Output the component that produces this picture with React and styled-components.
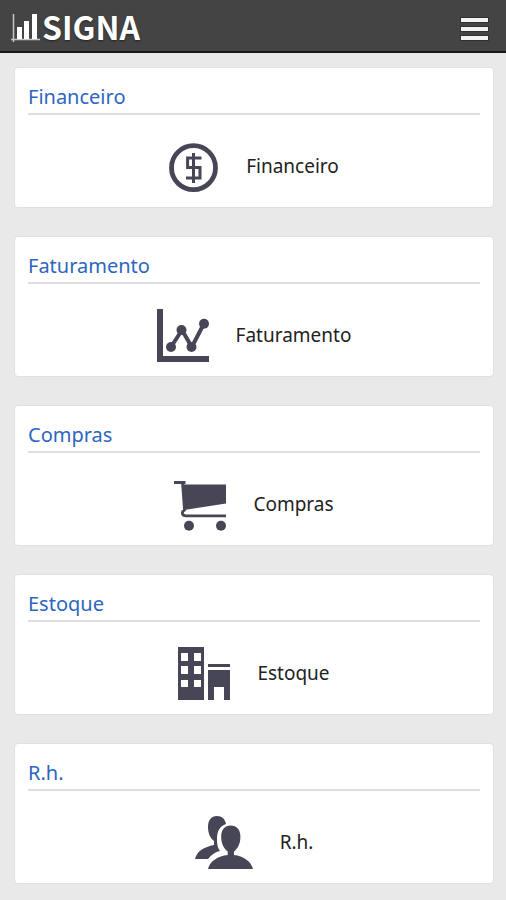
import React from 'react'
import styled, { createGlobalStyle } from 'styled-components'

const GlobalStyle = createGlobalStyle`
    *{
        box-sizing:border-box;
    }

    body{
        margin:0;
        background-color:#e9e9e9;
        font-family:"Noto Sans", "Open Sans", sans-serif;
    }
`

const Header = styled.header`
    display:flex;
    align-items:center;
    justify-content:space-between;
    height:53px;
    padding:0 16px 0 10px;
    background-color:#444;
    border-bottom:2px solid #1c1919;
`

const Logo = styled.a`
    display:flex;
    align-items:center;
    gap:1px;
    color:#fff;
    font-family:"Noto Sans CJK JP", "Open Sans", sans-serif;
    font-size:32px;
    font-weight:700;
    line-height:40px;
    text-decoration:none;
    text-shadow:0 1px 2px #222;
`

const MenuButton = styled.button`
    display:flex;
    padding:4px 0 0;
    border:none;
    background-color:transparent;
    cursor:pointer;
`

const Main = styled.main`
    display:flex;
    flex-direction:column;
    gap:28px;
    padding:14px 12px 16px 14px;
`

const Card = styled.section`
    padding:14px 13px;
    background-color:#fff;
    border:1px solid #e0e0e0;
    border-radius:4px;
`

const Title = styled.h2`
    margin:0;
    padding-bottom:1px;
    border-bottom:2px solid #dedede;
    color:#2c66c0;
    font-size:20px;
    font-weight:400;
    line-height:30px;
`

const Item = styled.a`
    display:flex;
    align-items:center;
    justify-content:center;
    gap:27px;
    margin-top:24px;
    color:#222;
    font-size:19px;
    line-height:54px;
    text-decoration:none;
`

const Icon = styled.svg`
    flex:none;
    width:${({$width}) => $width}px;
    height:54px;
    color:#464657;
`

const LogoIcon = () => (
    <svg width="31" height="32" viewBox="0 0 31 32" fill="#fff" aria-hidden="true">
        <path d="M3.5 4V32M1 29.5H30" stroke="#c4c4c4" strokeWidth="1.5" />
        <path d="M7 17h5v12H7zM14 11h5v18h-5zM22 4h5v25h-5z" />
    </svg>
)

const MenuIcon = () => (
    <svg width="30" height="28" viewBox="0 0 30 28" aria-hidden="true">
        <path d="M0 3h29v6H0zM0 12h29v6H0zM0 21h29v6H0z" fill="#303030" />
        <path d="M1 4h27v4H1zM1 13h27v4H1zM1 22h27v4H1z" fill="#f2f4f4" />
    </svg>
)

const MoneyIcon = () => (
    <Icon $width={50} viewBox="0 0 50 54" fill="none" stroke="currentColor" aria-hidden="true">
        <circle cx="24.5" cy="28.7" r="22" strokeWidth="4.8" />
        <path d="M24.5 14v30M32.5 19H18.6v9.6H31V39H17" strokeWidth="3" />
    </Icon>
)

const ChartIcon = () => (
    <Icon $width={52} viewBox="0 0 52 54" fill="currentColor" aria-hidden="true">
        <path d="M0 1h6v47h46v6H0z" />
        <path d="M14 39L25 22l9.8 17 12.2-23.500" fill="none" stroke="currentColor" strokeWidth="4" />
        <circle cx="14" cy="39" r="5" />
        <circle cx="24.5" cy="22" r="5" />
        <circle cx="34.5" cy="39" r="5" />
        <circle cx="47" cy="15.7" r="5" />
    </Icon>
)

const CartIcon = () => (
    <Icon $width={52} viewBox="0 0 52 54" fill="currentColor" aria-hidden="true">
        <path d="M8 7.5h44v19L10 33z" />
        <path
            d="M0 5.5h11.5M8.5 5.5L10.5 33C7 35 8 38.8 12 38.8h40"
            fill="none"
            stroke="currentColor"
            strokeWidth="2.8"
        />
        <circle cx="15" cy="48.7" r="5" />
        <circle cx="47" cy="48.7" r="5" />
    </Icon>
)

const BuildingIcon = () => (
    <Icon $width={52} viewBox="0 0 52 54" fill="currentColor" aria-hidden="true">
        <path
            fillRule="evenodd"
            d="M0 1h26v53H0zM3 7v8h7V7zM16 7v8h7V7zM3 20v8h7v-8zM16 20v8h7v-8zM3 34v7h7v-7zM16 34v7h7v-7z"
        />
        <path d="M30 18h22v3H30zM30 24h22v30h-6V41H36v13h-6z" />
    </Icon>
)

const PeopleIcon = () => (
    <Icon $width={58} viewBox="0 0 58 54" fill="currentColor" aria-hidden="true">
        <path d="M22 1c-6 0-9 4-9 11 0 6 2 11 6 14v4C9 32 2 36 0 44h13c3-4 7-7 12-8-3-4-3-9-3-13 0-7 3-12 9-14-1-5-4-8-9-8z" />
        <path d="M35.7 10.5c-6 0-9.5 4-9.5 11.5 0 6 2.5 11.5 6.5 14.5V40C23 41 15 46 13 54h45c-2-8-10-13-19-14v-3.5c4-3 6.4-8.5 6.4-14.5 0-7.5-3.7-11.5-9.7-11.5z" />
    </Icon>
)

const sections = [
    { name: 'Financeiro', Symbol: MoneyIcon },
    { name: 'Faturamento', Symbol: ChartIcon },
    { name: 'Compras', Symbol: CartIcon },
    { name: 'Estoque', Symbol: BuildingIcon },
    { name: 'R.h.', Symbol: PeopleIcon },
]

const App = () => {
  return (
    <>
        <GlobalStyle />
        <Header>
            <Logo href="#">
                <LogoIcon />
                SIGNA
            </Logo>
            <MenuButton type="button" aria-label="Menu">
                <MenuIcon />
            </MenuButton>
        </Header>
        <Main>
            {sections.map(({ name, Symbol }) => (
                <Card key={name}>
                    <Title>{name}</Title>
                    <Item href="#">
                        <Symbol />
                        {name}
                    </Item>
                </Card>
            ))}
        </Main>
    </>
  )
}

export default App
